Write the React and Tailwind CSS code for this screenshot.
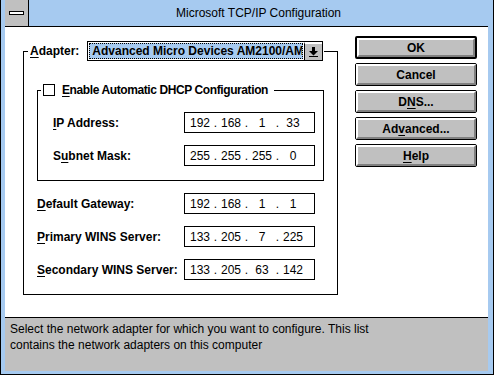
const font = { fontFamily: '"Liberation Sans", Arial, sans-serif' };

function U({ children }) {
  return <span className="underline underline-offset-2">{children}</span>;
}

function IpBox({ parts }) {
  return (
    <div className="w-[131px] h-[21px] border border-black bg-white flex items-center pl-[3px] text-[12px] font-normal leading-none">
      {parts.map((p, i) => (
        <div key={i} className="flex items-center">
          <span className="w-[24px] text-center">{p}</span>
          {i < 3 && <span className="w-[7px] text-center">.</span>}
        </div>
      ))}
    </div>
  );
}

function Row({ label, parts, className }) {
  return (
    <div className={"flex items-center justify-between " + (className || "")}>
      <span>{label}</span>
      <IpBox parts={parts} />
    </div>
  );
}

function Btn({ children, main }) {
  return (
    <div
      className={
        "h-[23px] rounded-[2px] bg-[#c0c0c0] flex " +
        (main ? "border-2 border-black" : "border border-black")
      }
    >
      <div className="flex-1 flex items-center justify-center border-t-2 border-l-2 border-white border-r-2 border-b-2 border-r-[#808080] border-b-[#808080] text-[12px] font-bold">
        {children}
      </div>
    </div>
  );
}

export default function App() {
  return (
    <div
      className="w-[494px] h-[375px] bg-[#a6caf0] border-l border-r border-b border-black pl-[4px] pr-[5px] pb-[3px] flex flex-col text-black"
      style={font}
    >
      {/* title bar */}
      <div className="h-[27px] flex border-b border-black shrink-0">
        <div className="w-[24px] bg-[#c0c0c0] border-r border-black flex items-center justify-center">
          <div className="w-[15px] h-[4px] bg-white border border-black" />
        </div>
        <div className="flex-1 flex items-center justify-center text-[12px]">
          Microsoft TCP/IP Configuration
        </div>
      </div>

      {/* client */}
      <div className="flex-1 bg-white flex items-start pl-[18px] pt-[14px] text-[12px] font-bold">
        <fieldset className="w-[315px] min-w-0 border border-black">
          <legend className="ml-[4px] pl-[2px] flex items-center h-[20px]">
            <span>
              <U>A</U>dapter:
            </span>
            <div className="ml-[8px] w-[236px] h-[20px] border border-black flex">
              <div className="flex-1 min-w-0 m-[1px] bg-[#a6caf0] border border-dotted border-black flex items-center pl-[2px] overflow-hidden whitespace-nowrap">
                Advanced Micro Devices AM2100/AM2100
              </div>
              <div className="w-[18px] bg-[#c0c0c0] border-l border-black border-t-2 border-t-white flex items-center justify-center">
                <svg width="9" height="10" viewBox="0 0 9 10">
                  <path d="M3 0h3v4h3l-4.5 4.5L0 4h3z" fill="black" />
                  <rect x="0" y="9" width="9" height="1" fill="black" />
                </svg>
              </div>
            </div>
            <span className="w-[1px]" />
          </legend>

          <div className="pl-[13px] pr-[22px] pb-[14px]">
            <fieldset className="mt-[21px] w-[287px] min-w-0 border border-black">
              <legend className="ml-[3px] pl-[2px] pr-[6px] h-[16px] flex items-center">
                <div className="w-[12px] h-[12px] border border-black bg-white" />
                <span className="ml-[7px] tracking-[-0.4px]">
                  <U>E</U>nable Automatic DHCP Configuration
                </span>
              </legend>
              <div className="pl-[15px] pr-[8px] pt-[14px] pb-[14px]">
                <Row label={<><U>I</U>P Address:</>} parts={["192", "168", "1", "33"]} />
                <Row className="mt-[12px]" label={<>S<U>u</U>bnet Mask:</>} parts={["255", "255", "255", "0"]} />
              </div>
            </fieldset>

            <Row className="mt-[12px]" label={<><U>D</U>efault Gateway:</>} parts={["192", "168", "1", "1"]} />
            <Row className="mt-[12px]" label={<><U>P</U>rimary WINS Server:</>} parts={["133", "205", "7", "225"]} />
            <Row className="mt-[12px]" label={<><U>S</U>econdary WINS Server:</>} parts={["133", "205", "63", "142"]} />
          </div>
        </fieldset>

        <div className="ml-[17px] mt-[-5px] w-[122px] flex flex-col gap-[4px]">
          <Btn main>OK</Btn>
          <Btn>Cancel</Btn>
          <Btn>
            D<U>N</U>S...
          </Btn>
          <Btn>
            Ad<U>v</U>anced...
          </Btn>
          <Btn>
            <U>H</U>elp
          </Btn>
        </div>
      </div>

      {/* status */}
      <div className="h-[54px] shrink-0 bg-[#c0c0c0] border-t border-black px-[5px] pt-[3px] text-[12px] leading-[16px]">
        Select the network adapter for which you want to configure. This list
        <br />
        contains the network adapters on this computer
      </div>
    </div>
  );
}
